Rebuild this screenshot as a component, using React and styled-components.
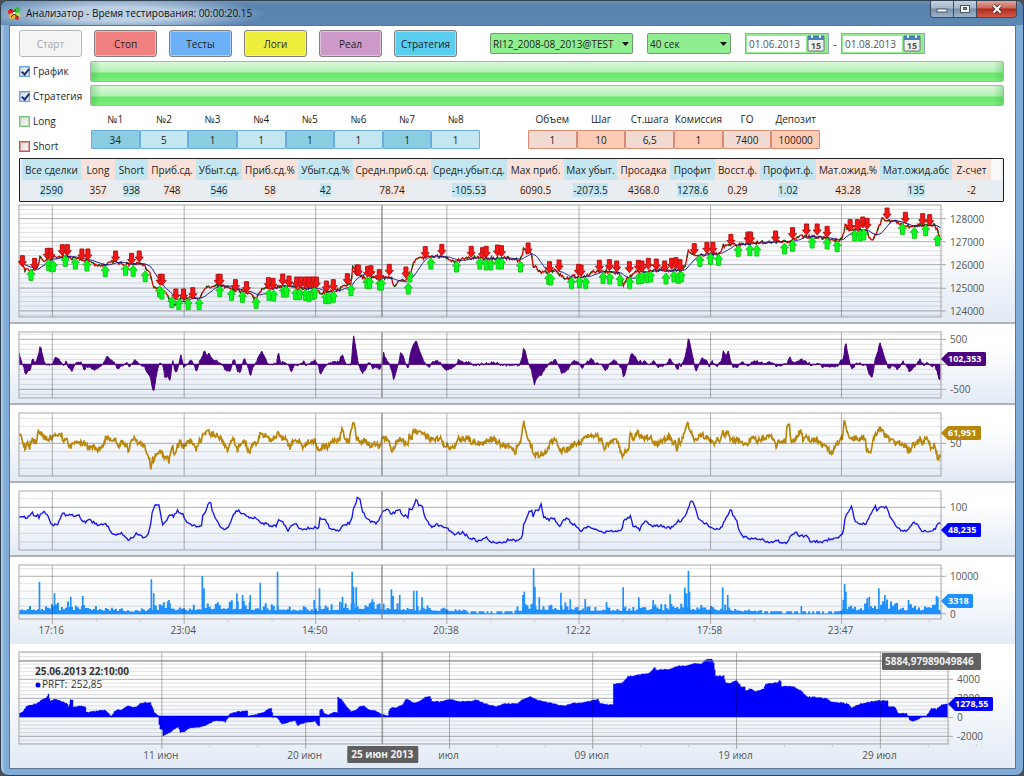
import React from 'react';
import styled, { createGlobalStyle, css } from 'styled-components';

const colors = {
    text: '#1e1e1e',
    axis: '#555',
    blueCell: '#c3e6f1',
    pinkCell: '#f8e2d9',
    green: '#90ee90',
    purple: '#4b0082',
    gold: '#b8860b',
    blue: '#0000ff',
    sky: '#1e90ff',
};

const font = '"Segoe UI", "Open Sans", "Noto Sans", sans-serif';

/* ---------- data ---------- */

// series are stored in chunks, three units per pixel
const join = (size, chunks) => chunks.flatMap((chunk, i) => (
    chunk.trim().split(/\s+/).map(pair => {
        const [x, y] = pair.split(',').map(Number);
        return [x + i * size, y];
    })
));

const rand = n => {
    const v = Math.sin(n * 12.9898) * 43758.5453;
    return v - Math.floor(v);
};

const valueAt = (points, x) => {
    const i = points.findIndex(p => p[0] >= x);
    if (i < 0) return points[points.length - 1][1];
    if (i === 0) return points[0][1];
    const [x0, y0] = points[i - 1];
    const [x1, y1] = points[i];
    return y0 + (y1 - y0) * (x - x0) / (x1 - x0 || 1);
};

const sample = (points, step, noise) => {
    const out = [];
    const end = points[points.length - 1][0];
    for (let x = points[0][0]; x <= end; x += step) {
        out.push([x, valueAt(points, x) + (rand(x) - 0.5) * noise]);
    }
    return out;
};

const toLine = points => 'M' + points.map(([x, y]) => `${x} ${y.toFixed(1)}`).join('L');

const toArea = (points, base) => (
    `M${points[0][0]} ${base}L${points.map(([x, y]) => `${x} ${y.toFixed(1)}`).join('L')}L${points[points.length - 1][0]} ${base}Z`
);

const toBars = (points, base, width) => (
    points.map(([x, y]) => `M${x} ${base}V${y.toFixed(1)}h${width}V${base}Z`).join('')
);

const price = join(1020, [
    `57,185 62,190 68,196 75,212 80,206 86,214 93,208 100,210 106,206 113,200 120,172 124,178 130,184 140,176 150,176
    165,170 172,172 180,168 205,168 215,175 225,172 240,178 262,182 275,188 290,196 300,200 310,194 320,190 330,182
    345,184 355,190 385,193 400,190 425,190 440,205 450,215 455,240 460,262 470,265 480,260 490,270 500,282 508,294
    515,310 526,318 535,300 555,296 575,294 598,294 605,284 612,268 625,262 640,256 660,256 680,262 700,268 730,275
    750,280 760,290 768,296 778,284 785,272 795,264 810,266 830,264 850,256 870,260 890,266 945,262 955,272 965,285
    975,275 985,278 1000,272 1019,268`,
    `0,270 10,255 35,253 38,200 44,210 50,205 55,222 65,230 80,234 95,232 120,238 145,228 155,232 161,260 170,250
    190,238 205,236 215,215 222,190 230,176 245,174 260,172 280,170 300,170 310,168 330,180 350,184 370,177 400,173
    430,176 500,175 540,181 548,168 553,142 560,158 570,150 578,170 582,205 590,198 600,215 620,216 650,212 665,226
    675,236 690,234 700,228 720,230 740,228 760,216 790,212 810,216 835,220 845,230 852,255 860,236 870,235 880,218
    900,215 930,212 960,210 1019,210`,
    `0,214 12,206 20,190 26,150 35,160 45,165 60,166 100,160 120,162 130,140 140,135 150,133 175,136 200,130 240,128
    280,126 330,124 345,116 360,110 400,110 430,112 450,118 485,120 494,100 498,68 503,85 510,90 550,90 560,88
    568,105 577,125 585,112 592,100 600,80 608,55 620,60 635,65 660,68 680,78 705,80 720,74 765,76 775,90 780,105 785,108`,
]);

const sells = join(1020, [
    `67,200 104,208 142,178 152,178 187,167 202,167 246,180 264,180 347,186 395,193 418,186 481,256 487,256 528,300
    551,300 579,296 655,256 661,256 707,272 740,278 806,266 820,268 849,255 868,261 891,264 903,264 917,264 928,264
    940,264 950,264 980,276 1001,272`,
    `23,254 52,228 56,228 84,232 94,230 119,242 149,226 199,234 257,173 307,166 395,172 429,176 440,172 474,168
    486,170 566,162 630,218 659,213 717,226 725,228 780,214 810,212 832,216 870,218 897,214 908,216 927,208 951,210
    976,216 997,208 1010,206`,
    `2,212 45,164 83,160 101,160 155,136 206,129 214,129 289,126 340,116 382,105 414,105 444,112 513,92 535,92
    551,84 564,88 624,57 679,70 731,74 752,77`,
]);

const buys = join(1020, [
    `93,208 146,178 154,182 160,182 196,166 226,174 261,180 316,197 377,193 400,196 436,212 479,258 486,264 516,290
    537,296 565,296 598,296 660,257 695,268 728,274 769,292 808,268 822,270 851,258 860,258 888,266 900,266 917,268
    928,272 938,266 945,262 978,278 988,278 1001,274`,
    `34,254 82,232 90,232 120,237 126,237 206,249 211,213 274,174 351,183 421,174 440,177 454,177 476,174 486,174
    543,183 628,220 634,222 696,232 720,230 739,232 791,217 811,219 842,224 871,232 898,219 908,217 923,214 934,213
    980,219 1004,213 1017,217`,
    `6,213 62,166 94,160 118,163 177,136 212,134 233,135 316,129 340,121 399,111 444,114 474,122 527,90 543,90
    554,87 670,70 706,82 740,74 776,104`,
]);

const momentum = join(1020, [
    `57,460 62,480 68,495 72,505 77,527 83,515 92,508 97,470 103,490 110,480 115,465 121,437 127,465 133,485 142,495
    155,490 160,492 166,470 175,476 185,485 190,500 198,485 205,500 217,512 228,487 245,488 252,508 265,500 280,510
    300,503 310,490 321,466 335,480 345,490 352,508 370,495 377,486 390,500 405,478 415,490 432,500 445,520 452,530
    458,572 463,572 470,520 479,487 490,495 495,533 505,530 511,540 518,480 527,522 535,500 543,468 552,500 560,495
    575,480 583,495 590,516 600,480 608,470 613,448 621,470 628,460 640,478 660,488 670,500 680,514 692,514 697,490
    704,472 713,518 722,515 733,475 745,500 752,532 760,500 770,485 778,470 785,455 795,470 803,492 815,495 830,492
    836,458 843,490 850,485 860,490 868,500 874,518 885,497 905,492 912,480 918,494 930,490 947,480 957,500 962,526
    975,500 985,492 1000,488 1019,484`,
    `0,480 8,462 16,485 25,495 35,495 38,450 42,410 50,450 56,492 67,520 80,505 85,485 93,488 100,510 110,502 120,508
    128,490 132,460 140,478 150,490 158,520 162,540 170,510 178,490 183,458 192,468 198,490 206,508 212,460 220,440
    226,425 231,424 240,455 255,488 268,505 280,484 300,485 310,500 320,512 340,502 352,492 358,478 370,488 395,487
    403,498 430,492 465,487 490,497 540,495 548,475 553,440 560,465 568,495 576,510 585,555 593,530 605,525 615,510
    625,495 648,480 660,500 667,522 685,510 695,490 710,480 720,490 728,505 738,490 755,475 765,488 785,492 800,512
    810,492 826,478 836,495 848,505 853,534 862,500 870,485 877,455 890,475 897,490 902,478 908,495 914,478 930,495
    942,482 957,502 980,495 992,472 1005,495 1019,512`,
    `0,490 5,500 15,478 22,450 28,410 38,460 50,515 60,490 70,472 80,480 90,500 97,482 105,492 113,499 122,488
    130,470 133,448 140,470 147,452 155,485 162,505 175,500 190,485 205,498 227,482 250,490 277,486 292,500 322,492
    332,468 340,488 368,480 390,490 400,498 415,488 430,500 450,500 475,498 485,482 493,478 499,424 507,465 515,500
    520,508 530,492 540,488 550,495 560,492 570,520 578,538 585,500 590,470 597,455 603,425 612,460 622,485 628,508
    640,498 655,508 672,484 680,495 692,515 708,500 722,478 735,495 745,487 760,500 768,498 774,515 781,540 785,532`,
]);

const strength = join(1020, [
    `57,112 62,110 68,130 75,148 83,130 88,145 95,118 105,125 112,115 116,85 122,100 130,112 145,115 158,112 165,102
    185,105 190,135 197,112 205,130 212,142 225,125 245,130 255,130 265,145 280,140 295,152 305,140 312,130 318,110
    330,115 345,115 355,142 365,128 375,130 385,150 395,125 403,108 410,125 425,128 435,145 445,160 453,205 458,175
    463,180 472,155 485,152 492,175 500,165 507,185 513,150 520,145 524,170 530,140 540,130 550,138 562,130 575,122
    588,148 598,120 605,122 610,95 618,103 628,95 638,105 655,108 665,118 675,135 685,150 695,120 703,118 712,152
    722,130 733,125 743,145 749,160 760,130 775,125 782,100 795,105 815,118 828,118 832,95 840,112 862,118 870,150
    880,125 895,125 910,140 925,125 945,120 958,158 970,140 985,140 1000,125 1019,118`,
    `0,118 8,85 15,115 28,130 35,80 40,72 47,85 50,115 65,125 75,118 85,130 98,140 110,130 118,142 130,112 145,120
    152,130 158,158 168,130 180,118 190,122 203,135 210,105 216,115 222,90 232,95 240,98 255,105 268,115 285,118
    302,115 315,138 330,140 345,140 355,118 375,115 385,112 400,130 430,130 455,115 475,125 490,138 515,140 526,160
    535,135 543,130 548,85 552,65 558,85 565,110 573,135 578,140 582,170 592,160 600,168 615,160 625,150 632,130
    650,120 665,155 685,145 705,130 720,128 735,115 745,108 770,108 785,118 795,145 810,130 825,115 840,140 849,170
    857,150 868,150 872,105 885,115 895,100 910,115 930,110 945,128 960,130 975,120 990,110 1000,125 1010,130
    1013,155 1019,120`,
    `0,132 10,115 20,85 26,68 32,90 45,120 55,115 65,103 80,110 92,120 105,138 115,120 125,118 130,90 138,105 147,90
    155,125 180,118 190,125 202,135 212,120 222,112 235,122 250,118 262,110 275,108 290,140 300,122 320,125 323,75
    330,70 335,125 350,115 365,98 372,118 385,108 400,125 410,115 425,130 435,140 445,145 458,160 465,140 480,125
    490,115 495,55 501,90 515,122 530,112 545,118 558,112 562,150 575,160 583,120 592,100 602,80 608,92 620,110
    640,122 650,135 665,125 680,140 688,155 700,138 712,130 722,115 730,130 745,112 755,140 768,135 777,178 785,160`,
]);

const range = join(1020, [
    `57,355 70,352 82,355 90,342 96,338 103,345 112,345 116,355 120,340 135,338 143,342 150,365 160,378 165,372
    173,372 185,348 190,340 200,348 212,342 222,350 238,345 245,362 258,370 268,355 275,365 288,370 298,380 305,370
    322,375 332,392 342,402 350,405 360,398 372,405 382,420 400,412 410,398 420,405 434,415 445,398 451,385 456,340
    462,320 468,313 478,313 483,345 488,372 500,362 512,342 520,350 532,332 540,340 548,340 555,358 562,370 578,376
    605,378 609,345 620,332 625,315 632,297 637,335 645,350 655,368 665,385 675,390 685,382 692,370 700,343 712,330
    725,340 738,345 750,355 770,352 780,370 790,370 805,372 815,380 830,378 835,362 850,368 860,385 868,392 875,375
    890,372 900,388 920,385 945,382 957,385 961,355 975,360 985,372 990,388 1010,392 1019,392`,
    `0,390 10,375 30,370 37,350 42,325 48,315 52,290 62,298 67,328 75,345 85,360 100,368 112,370 120,355 130,335
    143,325 155,342 180,330 188,345 205,350 210,325 220,325 225,310 231,288 237,318 248,318 255,350 265,368 278,382
    290,374 320,382 345,402 370,398 390,412 415,425 440,414 460,426 490,428 505,420 540,420 548,410 553,375 562,350
    570,332 578,335 580,355 586,335 598,328 605,315 612,350 628,360 642,355 660,378 683,350 695,368 710,378 722,392
    748,380 765,388 795,398 820,392 835,396 848,390 852,360 873,350 880,375 900,390 912,370 922,360 935,378 965,378
    990,385 1008,375 1019,360`,
    `0,368 10,360 22,340 33,305 43,308 50,330 58,358 80,370 95,385 108,390 128,382 132,365 145,345 154,325 163,352
    170,355 178,385 190,408 215,415 245,418 270,428 285,428 293,420 300,425 322,430 335,405 350,396 360,410 385,408
    395,426 440,424 450,418 485,408 492,395 498,355 508,335 517,322 527,360 545,372 562,372 570,352 580,335 588,318
    595,333 603,320 615,325 620,315 630,345 640,362 655,385 680,395 692,380 706,368 720,380 732,395 755,392 768,388
    777,372 785,370`,
]);

// typical bar height along the session
const volumeLevel = join(1020, [
    '57,24 150,24 200,30 250,24 300,18 400,7 450,20 500,30 560,18 600,28 700,38 780,26 860,18 940,17 1019,26',
    '0,32 60,26 120,34 260,20 300,12 380,8 390,2 520,3 525,14 560,26 640,32 720,20 840,14 900,24 1019,26',
    '0,28 40,26 150,22 165,8 290,5 480,5 490,30 550,26 565,42 640,34 700,20 785,24',
]);

const volumeSpikes = join(1020, [
    `116,546 161,580 210,590 246,588 452,538 459,580 505,600 605,528 610,565 709,580 726,585 749,585 779,548 831,515
    941,600 957,565 1018,605`,
    `6,590 35,515 39,560 47,562 96,598 153,568 158,588 178,585 220,572 229,572 245,592 548,585 552,575 580,505
    584,560 597,592 662,578 690,598 735,597 799,606 849,562 896,592 939,600 990,583`,
    `14,563 19,580 25,512 28,575 128,562 143,585 364,618 490,600 494,552 498,575 562,595 568,590 597,565 615,585
    686,600 770,588 774,592`,
]);

const profit = join(1536, [
    `57,312 68,305 78,290 90,285 105,282 125,270 138,262 145,252 148,272 165,268 180,272 200,282 205,292 210,270
    217,268 219,292 235,288 255,290 258,308 275,305 300,302 315,300 325,310 333,320 342,305 355,298 362,302 375,290
    388,288 395,292 410,290 420,280 435,278 450,277 455,290 462,308 475,318 478,356 486,358 488,377 500,372 515,362
    535,350 540,368 550,366 565,355 600,350 620,345 640,332 660,332 675,336 685,322 688,312 705,306 730,304 742,302
    744,319 775,312 790,308 805,297 814,295 818,322 830,322 845,342 885,332 892,346 920,335 935,336 945,333 953,345
    959,350 960,300 965,296 972,310 985,316 1000,308 1012,308 1014,262 1025,270 1040,290 1052,305 1065,302 1078,290
    1092,288 1105,298 1130,305 1150,315 1165,318 1168,295 1190,292 1208,285 1217,266 1230,272 1240,280 1260,274
    1275,262 1290,260 1296,275 1320,275 1340,270 1355,268 1375,275 1410,274 1430,270 1445,278 1470,285 1490,290
    1510,282 1535,282`,
    `0,280 15,282 30,270 55,260 70,268 100,276 140,285 158,288 180,280 210,278 240,272 258,268 265,280 290,284
    303,284 306,222 330,220 348,200 380,195 415,188 428,172 433,180 470,178 500,168 520,168 550,160 570,162 580,150
    600,147 608,162 610,198 638,198 640,218 655,220 675,212 690,232 700,230 703,245 715,235 730,245 755,238 762,222
    800,218 806,208 810,230 835,228 850,232 870,245 885,260 915,262 945,266 960,276 990,278 1010,282 1020,294
    1045,282 1065,278 1100,272 1128,272 1130,290 1150,292 1160,310 1185,310 1195,330 1205,334 1220,328 1232,320
    1245,318 1260,295 1275,298 1290,285 1310,282`,
]);

const pricePoints = sample(price, 3, 10);
const average = pricePoints.map(([x], i) => {
    const part = pricePoints.slice(Math.max(0, i - 14), i + 1);
    return [x, part.reduce((sum, p) => sum + p[1], 0) / part.length];
});
// bars are two pixels wide, a quiet market leaves gaps
const volumePoints = sample(volumeLevel, 6, 0).map(([x, level]) => {
    const r = rand(x + 7);
    if (level < 6) return [x, r < 0.4 ? 642 : 634];
    return [x, 636 - level * (0.2 + r * r * 0.9)];
});

const timeGrid = [[157, '17:16'], [553, '23:04'], [948, '14:50'], [1342, '20:38'], [1739, '12:22'], [2134, '17:58'], [2527, '23:47']];
const dateGrid = [[486, '11 июн'], [918, '20 июн'], [1350, 'июл'], [1780, '09 июл'], [2212, '19 июл'], [2644, '29 июл']];

const stats = [
    ['Все сделки', '2590', 59], ['Long', '357', 34], ['Short', '938', 33], ['Приб.сд.', '748', 48],
    ['Убыт.сд.', '546', 46], ['Приб.сд.%', '58', 56], ['Убыт.сд.%', '42', 55], ['Средн.приб.сд.', '78.74', 78],
    ['Средн.убыт.сд.', '-105.53', 76], ['Мах приб.', '6090.5', 57], ['Мах убыт.', '-2073.5', 53],
    ['Просадка', '4368.0', 53], ['Профит', '1278.6', 45], ['Восст.ф.', '0.29', 45], ['Профит.ф.', '1.02', 56],
    ['Мат.ожид.%', '43.28', 64], ['Мат.ожид.абс', '135', 72], ['Z-счет', '-2', 39],
];

const strategyParams = [['№1', '34'], ['№2', '5'], ['№3', '1'], ['№4', '1'], ['№5', '1'], ['№6', '1'], ['№7', '1'], ['№8', '1']];
const tradeParams = [['Объем', '1'], ['Шаг', '10'], ['Ст.шага', '6,5'], ['Комиссия', '1'], ['ГО', '7400'], ['Депозит', '100000']];

const actions = [
    ['Старт', '#f4f4f4', true], ['Стоп', '#f08080'], ['Тесты', '#6cb0f8'],
    ['Логи', '#eeee3c'], ['Реал', '#cc99c9'], ['Стратегия', '#5bcdef'],
];

/* ---------- charts ---------- */

const Arrow = ({ x, y, up }) => (
    <svg x={x} y={y} overflow="visible">
        <path
            d={up ? 'M0 0L4 5H2V11H-2V5H-4Z' : 'M0 0L4 -5H2V-11H-2V-5H-4Z'}
            fill={up ? '#00ff1e' : '#fa1414'}
            stroke={up ? '#14c814' : '#b41414'}
            strokeWidth="1"
        />
    </svg>
);

const Tag = ({ y, color, width, children }) => (
    <g>
        <path d={`M0 ${y}L7 ${y - 7}H${width - 1}L${width} ${y - 6}V${y + 6}L${width - 1} ${y + 7}H7Z`} fill={color} />
        <AxisText $tag x="7" y={y + 3}>{children}</AxisText>
    </g>
);

const Chart = ({
    height, top, span = 2769, verticals = timeGrid, cross = 1147, base, step, majors,
    labels = [], axis = 74, children, overlay, tag, first,
}) => {
    const minors = [];
    for (let y = base; y > top; y -= step) minors.push(y);
    for (let y = base + step; y < top + height * 3; y += step) minors.push(y);
    const toPx = y => (y - top) / 3;

    return (
        <ChartRow $first={first}>
            <Plot height={height}>
                <svg width="100%" height="100%" viewBox={`57 ${top} ${span} ${height * 3}`} preserveAspectRatio="none">
                    {minors.map(y => <path key={y} d={`M57 ${y}h${span}`} stroke="#000" strokeOpacity=".12" strokeWidth="3" />)}
                    {majors.map(y => <path key={y} d={`M57 ${y}h${span}`} stroke="#000" strokeOpacity=".22" strokeWidth="3" />)}
                    {children}
                    {verticals.map(([x]) => <path key={x} d={`M${x} ${top}v${height * 3}`} stroke="#000" strokeOpacity=".3" strokeWidth="3" />)}
                    <path d={`M${cross} ${top}v${height * 3}`} stroke="#777" strokeOpacity=".7" strokeWidth="5" />
                </svg>
                <rect width="100%" height={height} fill="none" stroke="#a6a6a6" strokeWidth="1" />
                {overlay}
            </Plot>
            <Axis $width={axis} height={height}>
                {minors.map(y => <path key={y} d={`M0 ${toPx(y)}h2`} stroke="#ccc" />)}
                {majors.map(y => <path key={y} d={`M0 ${toPx(y)}h5`} stroke="#aaa" />)}
                {labels.map(([y, text]) => <AxisText key={text} x="9" y={toPx(y) + 4}>{text}</AxisText>)}
                {tag}
            </Axis>
        </ChartRow>
    );
};

const TimeAxis = ({ grid, span, height, right, children }) => {
    const percent = x => `${(x - 57) / span * 100}%`;
    const gap = (grid[1][0] - grid[0][0]) / 3;

    return (
        <AxisRow $right={right} height={height}>
            {grid.map(([x, text]) => (
                <g key={text}>
                    <line x1={percent(x)} x2={percent(x)} y1="0" y2="5" stroke="#aaa" />
                    <line x1={percent(x + gap)} x2={percent(x + gap)} y1="0" y2="3" stroke="#ccc" />
                    <line x1={percent(x + gap * 2)} x2={percent(x + gap * 2)} y1="0" y2="3" stroke="#ccc" />
                    <AxisText $middle x={percent(x - 3)} y="15">{text}</AxisText>
                </g>
            ))}
            {children}
        </AxisRow>
    );
};

/* ---------- controls ---------- */

const LogoIcon = () => (
    <svg width="13" height="13" viewBox="0 0 13 13">
        <circle cx="3" cy="5" r="3" fill="#e8202a" />
        <circle cx="9" cy="3" r="3" fill="#35c13a" />
        <circle cx="4" cy="9" r="3" fill="#f2b01e" />
        <circle cx="10" cy="8" r="2.5" fill="#b7e04e" />
        <circle cx="9" cy="11" r="2" fill="#e8202a" />
        <path d="M2 2l3 3 3-2M3 10l3-3 4 3" stroke="#222" strokeWidth="1" fill="none" />
        <circle cx="6" cy="6" r="1.2" fill="#fff" />
    </svg>
);

const CalendarIcon = () => (
    <svg width="18" height="17" viewBox="0 0 18 17">
        <rect x="1" y="1" width="16" height="15" rx="1" fill="#f2f2f2" stroke="#6f6f6f" />
        <rect x="1" y="1" width="16" height="4" fill="#4683bd" />
        <path d="M5 0v3M13 0v3" stroke="#e8eef5" strokeWidth="2" />
        <text x="9" y="14" textAnchor="middle" fontSize="9" fontWeight="700" fill="#555">15</text>
    </svg>
);

const DateField = ({ label, value }) => (
    <StyledDate>
        <input type="text" aria-label={label} defaultValue={value} />
        <button type="button" aria-label={`${label}: календарь`}><CalendarIcon /></button>
    </StyledDate>
);

const Combo = ({ label, value, width }) => (
    <StyledCombo $width={width}>
        <select aria-label={label} defaultValue={value}>
            <option>{value}</option>
        </select>
        <svg width="7" height="4" viewBox="0 0 7 4"><path d="M0 0h7L3.5 4z" fill="#111" /></svg>
    </StyledCombo>
);

const Check = ({ id, label, checked, tone }) => (
    <CheckRow>
        <CheckBox type="checkbox" id={id} defaultChecked={checked} $tone={tone} />
        <label htmlFor={id}>{label}</label>
    </CheckRow>
);

const Params = ({ items, width, warm }) => (
    <ParamGrid $width={width}>
        {items.map(([label, value], i) => (
            <Param key={label} $warm={warm} $odd={i % 2 === 0}>
                <span>{label}</span>
                <input type="text" defaultValue={value} />
            </Param>
        ))}
    </ParamGrid>
);

const App = () => (
    <Window>
        <GlobalStyle />
        <TitleBar>
            <LogoIcon />
            <h1>Анализатор - Время тестирования: 00:00:20.15</h1>
            <WindowButtons>
                <WindowButton type="button" aria-label="Свернуть">
                    <svg width="12" height="10"><rect x="1" y="5" width="10" height="3" fill="#fff" stroke="#4c5563" /></svg>
                </WindowButton>
                <WindowButton type="button" aria-label="Развернуть">
                    <svg width="12" height="10">
                        <rect x="1.5" y="1.5" width="9" height="7" fill="#fff" stroke="#4c5563" />
                        <rect x="4.5" y="3.5" width="3" height="2" fill="#8895a8" stroke="#4c5563" />
                    </svg>
                </WindowButton>
                <WindowButton type="button" aria-label="Закрыть" $close>
                    <svg width="12" height="10">
                        <path d="M2.5 1.5l7 7M9.5 1.5l-7 7" stroke="#5c3030" strokeWidth="4" />
                        <path d="M2.5 1.5l7 7M9.5 1.5l-7 7" stroke="#fff" strokeWidth="2" />
                    </svg>
                </WindowButton>
            </WindowButtons>
        </TitleBar>

        <Content>
            <Toolbar>
                <Actions>
                    {actions.map(([label, color, disabled]) => (
                        <ActionButton key={label} type="button" $color={color} disabled={disabled}>{label}</ActionButton>
                    ))}
                </Actions>
                <Combo label="Инструмент" value="RI12_2008-08_2013@TEST" width={143} />
                <Combo label="Таймфрейм" value="40 сек" width={84} />
                <Dates>
                    <DateField label="Начало" value="01.06.2013" />
                    <span>-</span>
                    <DateField label="Конец" value="01.08.2013" />
                </Dates>
            </Toolbar>

            <Settings>
                <div>
                    <Check id="chart" label="График" checked tone="#6ea6dc" />
                    <Check id="strategy" label="Стратегия" checked tone="#6ea6dc" />
                    <Check id="long" label="Long" tone="#7cc57c" />
                    <Check id="short" label="Short" tone="#c8574d" />
                </div>
                <Progresses>
                    <Progress role="progressbar" aria-label="График" aria-valuenow={100} />
                    <Progress role="progressbar" aria-label="Стратегия" aria-valuenow={100} />
                    <ParamRow>
                        <Params items={strategyParams} width={389} />
                        <Params items={tradeParams} width={292} warm />
                    </ParamRow>
                </Progresses>
            </Settings>

            <StatsBox>
                <StatsTable>
                    <colgroup>
                        {stats.map(([name, , width]) => <StatCol key={name} $width={width} />)}
                        <col />
                    </colgroup>
                    <thead>
                        <tr>
                            {stats.map(([name]) => <th key={name}>{name}</th>)}
                            <td />
                        </tr>
                    </thead>
                    <tbody>
                        <tr>
                            {stats.map(([name, value]) => <td key={name}><span>{value}</span></td>)}
                            <td />
                        </tr>
                    </tbody>
                </StatsTable>
            </StatsBox>

            <Panel $line>
                <Chart
                    first
                    height={112}
                    top={15}
                    base={56}
                    step={13.8}
                    majors={[56, 125, 194, 265, 333]}
                    labels={[[56, '128000'], [125, '127000'], [194, '126000'], [265, '125000'], [333, '124000']]}
                    overlay={(
                        <g>
                            {buys.map(([x, y]) => <Arrow key={x} up x={`${(x - 57) / 27.69}%`} y={(y - 15) / 3} />)}
                            {sells.map(([x, y]) => <Arrow key={x} x={`${(x - 57) / 27.69}%`} y={(y - 15) / 3} />)}
                        </g>
                    )}
                >
                    <path d={toLine(pricePoints)} fill="none" stroke="#d40000" strokeWidth="4" />
                    <path d={toLine(pricePoints)} fill="none" stroke="#006400" strokeWidth="4" strokeDasharray="10 22" />
                    <path d={toLine(average)} fill="none" stroke="#14148c" strokeWidth="3" />
                </Chart>
            </Panel>

            <Panel $line>
                <Chart
                    height={66}
                    top={396}
                    base={493}
                    step={15}
                    majors={[418, 493, 568]}
                    labels={[[418, '500'], [568, '-500']]}
                    tag={<Tag y={27} width={45} color={colors.purple}>102,353</Tag>}
                >
                    <path d={toArea(sample(momentum, 3, 7), 493)} fill={colors.purple} stroke={colors.purple} strokeWidth="3" />
                </Chart>
            </Panel>

            <Panel $line>
                <Chart
                    height={63}
                    top={39}
                    base={130}
                    step={25}
                    majors={[130]}
                    labels={[[130, '50']]}
                    tag={<Tag y={20} width={40} color={colors.gold}>61,951</Tag>}
                >
                    <path d={toLine(sample(strength, 2, 18))} fill="none" stroke={colors.gold} strokeWidth="5" />
                </Chart>
            </Panel>

            <Panel $line>
                <Chart
                    height={59}
                    top={273}
                    base={322}
                    step={26}
                    majors={[322]}
                    labels={[[322, '100']]}
                    tag={<Tag y={39} width={40} color={colors.blue}>48,235</Tag>}
                >
                    <path d={toLine(sample(range, 4, 8))} fill="none" stroke="#1414f5" strokeWidth="4" />
                </Chart>
            </Panel>

            <Panel>
                <Chart
                    height={54}
                    top={495}
                    base={641}
                    step={22.5}
                    majors={[529, 641]}
                    labels={[[529, '10000'], [641, '0']]}
                    tag={<Tag y={36} width={32} color={colors.sky}>3318</Tag>}
                >
                    <path d={toBars(volumePoints, 642, 6)} fill={colors.sky} />
                    <path d={toBars(volumeSpikes, 642, 5)} fill={colors.sky} />
                    <path d="M57 642h2769" stroke={colors.sky} strokeOpacity=".6" strokeWidth="3" />
                </Chart>
                <TimeAxis grid={timeGrid} span={2769} height={25} right={74} />
            </Panel>

            <Panel>
                <Chart
                    height={92}
                    top={126}
                    span={2790}
                    axis={67}
                    verticals={dateGrid}
                    cross={1148}
                    base={322}
                    step={11.4}
                    majors={[208, 265, 322, 379]}
                    labels={[[208, '4000'], [265, '2000'], [322, '0'], [379, '-2000']]}
                    overlay={(
                        <g>
                            <line x1="0" x2="100%" y1="9" y2="9" stroke="#777" strokeWidth="1" />
                            <PlotText $bold x="16" y="23">25.06.2013 22:10:00</PlotText>
                            <circle cx="19" cy="33" r="2.5" fill={colors.blue} />
                            <PlotText x="23" y="36">PRFT:</PlotText>
                            <PlotText x="52" y="36">252,85</PlotText>
                        </g>
                    )}
                    tag={(
                        <g>
                            <Tag y={52} width={45} color={colors.blue}>1278,55</Tag>
                            <rect x="-66" y="1" width="99" height="17" rx="1" fill="#555" fillOpacity=".92" />
                            <PlotText $light x="-63" y="13">5884,97989049846</PlotText>
                        </g>
                    )}
                >
                    <path d={toBars(sample(profit, 3, 3), 319, 3)} fill={colors.blue} stroke={colors.blue} strokeWidth="1" />
                    <path d="M57 319h2790" stroke={colors.blue} strokeWidth="4" />
                </Chart>
                <TimeAxis grid={dateGrid} span={2790} height={24} right={67}>
                    <svg x={`${(1148 - 57) / 27.9}%`} y="2" overflow="visible">
                        <rect x="-35" width="71" height="17" rx="1" fill="#5f5f5f" />
                        <PlotText $light $middle y="12">25 июн 2013</PlotText>
                    </svg>
                </TimeAxis>
            </Panel>
        </Content>
    </Window>
);

export default App;

/* ---------- styles ---------- */

const GlobalStyle = createGlobalStyle`
    * { box-sizing: border-box; }
    body {
        margin: 0;
        background: #4a4f55;
        color: ${colors.text};
        font: 10px/14px ${font};
    }
    input, button, select { font: inherit; color: inherit; }
`;

const Window = styled.div`
    padding: 0 7px 6px 8px;
    border: 1px solid #32414f;
    border-radius: 8px;
    background: linear-gradient(90deg, #b5cde6 0, #7fabd6 4px, #7fabd6 100%);
`;

const TitleBar = styled.header`
    display: flex;
    align-items: center;
    gap: 5px;
    height: 24px;
    margin: 0 -7px 0 -8px;
    padding-left: 7px;
    border-radius: 7px 7px 0 0;
    background:
        radial-gradient(ellipse 150px 18px at 115px 13px, rgba(205, 220, 236, .85) 40%, transparent),
        linear-gradient(180deg, #6d90b5, #5882ad 5px, #5c87b3);
    & > h1 {
        flex: 1;
        margin: 0;
        font-size: 10px;
        font-weight: 400;
        color: #111;
    }
`;

const WindowButtons = styled.div`
    display: flex;
    align-self: flex-start;
    margin-right: 6px;
    border: 1px solid #3c4b5e;
    border-top: 0;
    border-radius: 0 0 4px 4px;
    overflow: hidden;
`;

const WindowButton = styled.button`
    display: flex;
    align-items: center;
    justify-content: center;
    width: ${({ $close }) => ($close ? 39 : 23)}px;
    height: 16px;
    padding: 0;
    border: 0;
    border-right: ${({ $close }) => ($close ? 0 : '1px solid #3c4b5e')};
    background: ${({ $close }) => ($close
        ? 'linear-gradient(180deg, #dfa49b 0, #c9685b 7px, #b02a1a 8px, #cf5a45 100%)'
        : 'linear-gradient(180deg, #c3d1e0 0, #a2b6cc 7px, #7990ab 8px, #9db3ca 100%)')};
`;

const Content = styled.main`
    border: 1px solid #5b7690;
    background: #fff;
`;

const Toolbar = styled.div`
    display: flex;
    align-items: center;
    gap: 14px;
    padding: 4px 8px 0 9px;
`;

const Actions = styled.div`
    display: flex;
    gap: 12px;
    margin-right: 19px;
`;

const ActionButton = styled.button`
    width: 63px;
    height: 27px;
    padding: 0;
    border: 1px solid #808080;
    border-radius: 3px;
    background: ${({ $color }) => $color};
    box-shadow: inset 0 0 0 1px rgba(255, 255, 255, .4);
    &:disabled {
        border-color: #b5b5b5;
        color: #a5a5a5;
    }
`;

const StyledCombo = styled.div`
    position: relative;
    width: ${({ $width }) => $width}px;
    & > select {
        display: block;
        width: 100%;
        height: 21px;
        padding: 0 12px 0 2px;
        border: 1px solid #6f9d6f;
        border-radius: 2px;
        background: ${colors.green};
        appearance: none;
    }
    & > svg {
        position: absolute;
        right: 4px;
        top: 9px;
        pointer-events: none;
    }
`;

const Dates = styled.div`
    display: flex;
    align-items: center;
    & > span { width: 12px; text-align: center; }
`;

const StyledDate = styled.div`
    display: flex;
    align-items: center;
    justify-content: space-between;
    width: 84px;
    height: 21px;
    padding: 0 3px 0 1px;
    border: 1px solid #8fa3b8;
    background: ${colors.green};
    & > input {
        width: 59px;
        height: 16px;
        padding: 0 2px;
        border: 0;
        background: #fff;
        color: #555;
    }
    & > button {
        display: flex;
        padding: 0;
        border: 0;
        background: none;
    }
`;

const Settings = styled.div`
    display: grid;
    grid-template-columns: 71px 1fr;
    padding: 2px 11px 0 9px;
`;

const CheckRow = styled.div`
    display: flex;
    align-items: center;
    gap: 3px;
    height: 24px;
    & + & { margin-top: 1px; }
`;

const CheckBox = styled.input`
    flex: none;
    width: 11px;
    height: 11px;
    margin: 0;
    border: 1px solid ${({ $tone }) => $tone};
    background: linear-gradient(135deg, #d8d8d8, #fff);
    box-shadow: inset 0 0 0 1px ${({ $tone }) => $tone}88;
    appearance: none;
    &:checked::after {
        content: '';
        display: block;
        width: 3px;
        height: 6px;
        margin: 0 0 0 3px;
        border: solid #1b2c7c;
        border-width: 0 2px 2px 0;
        transform: rotate(40deg);
    }
`;

const Progresses = styled.div`
    padding-top: 2px;
`;

const Progress = styled.div`
    height: 21px;
    margin-bottom: 3px;
    border: 1px solid #b0b0b0;
    border-radius: 2px;
    background:
        linear-gradient(90deg, rgba(60, 180, 70, .35), transparent 10px, transparent calc(100% - 10px), rgba(60, 180, 70, .35)),
        linear-gradient(180deg, #dbf8db 0, #b3f2b5 10px, #66e76a 11px, #7fee80 100%);
`;

const ParamRow = styled.div`
    display: flex;
    gap: 48px;
    padding: 1px 0 0 1px;
`;

const ParamGrid = styled.div`
    display: flex;
    width: ${({ $width }) => $width}px;
`;

const Param = styled.label`
    flex: 1;
    min-width: 0;
    text-align: center;
    & > span {
        display: block;
        height: 20px;
        margin: 0 -4px;
        line-height: 18px;
    }
    & > input {
        display: block;
        width: 100%;
        height: 19px;
        padding: 0;
        border-radius: 1px;
        text-align: center;
        ${({ $warm, $odd }) => ($warm
        ? css`
            border: 1px solid #db8a70;
            background: ${$odd ? '#f0dad1' : '#ffcbb4'};
        `
        : css`
            border: 1px solid #68aee0;
            background: ${$odd ? '#8acde1' : '#c3e6f1'};
        `)}
    }
`;

const StatsBox = styled.div`
    margin: 0 11px 0 9px;
    padding: 0 2px 2px;
    border: 1px solid #222;
    border-radius: 1px;
    background: #e7edf0;
`;

const StatsTable = styled.table`
    width: 100%;
    border-collapse: collapse;
    table-layout: fixed;
    text-align: center;
    white-space: nowrap;
    & th, & td { padding: 0; font-weight: 400; }
    & th { height: 21px; background: ${colors.pinkCell}; }
    & th:nth-child(odd) { background: ${colors.blueCell}; }
    & th:nth-child(even), & td:nth-child(even) > span { background: ${colors.pinkCell}; }
    & td:nth-child(odd) > span { background: ${colors.blueCell}; }
    & thead td { background: #fafafa; }
    & tbody td { height: 19px; }
`;

const StatCol = styled.col`
    width: ${({ $width }) => $width}px;
`;

const Panel = styled.section`
    background: linear-gradient(180deg, #fff 30%, #e2eaf5);
    border-bottom: ${({ $line }) => ($line ? '2px solid #b2b2b2' : 0)};
    padding-bottom: ${({ $line }) => ($line ? 5 : 0)}px;
`;

const ChartRow = styled.div`
    display: flex;
    padding: ${({ $first }) => ($first ? 3 : 8)}px 0 0 9px;
`;

const Plot = styled.svg`
    flex: 1;
    min-width: 0;
    overflow: visible;
`;

const Axis = styled.svg`
    flex: none;
    width: ${({ $width }) => $width}px;
    overflow: visible;
`;

const AxisRow = styled.svg`
    display: block;
    width: calc(100% - 9px - ${({ $right }) => $right}px);
    margin-left: 9px;
    overflow: visible;
`;

const AxisText = styled.text`
    font-size: 10px;
    fill: ${colors.axis};
    ${({ $middle }) => $middle && css`text-anchor: middle;`}
    ${({ $tag }) => $tag && css`
        font-size: 9px;
        font-weight: 700;
        fill: #fff;
    `}
`;

const PlotText = styled.text`
    font-size: 10px;
    fill: #333;
    ${({ $bold }) => $bold && css`font-weight: 700;`}
    ${({ $light }) => $light && css`font-weight: 700; fill: #f0f0f0;`}
    ${({ $middle }) => $middle && css`text-anchor: middle;`}
`;
